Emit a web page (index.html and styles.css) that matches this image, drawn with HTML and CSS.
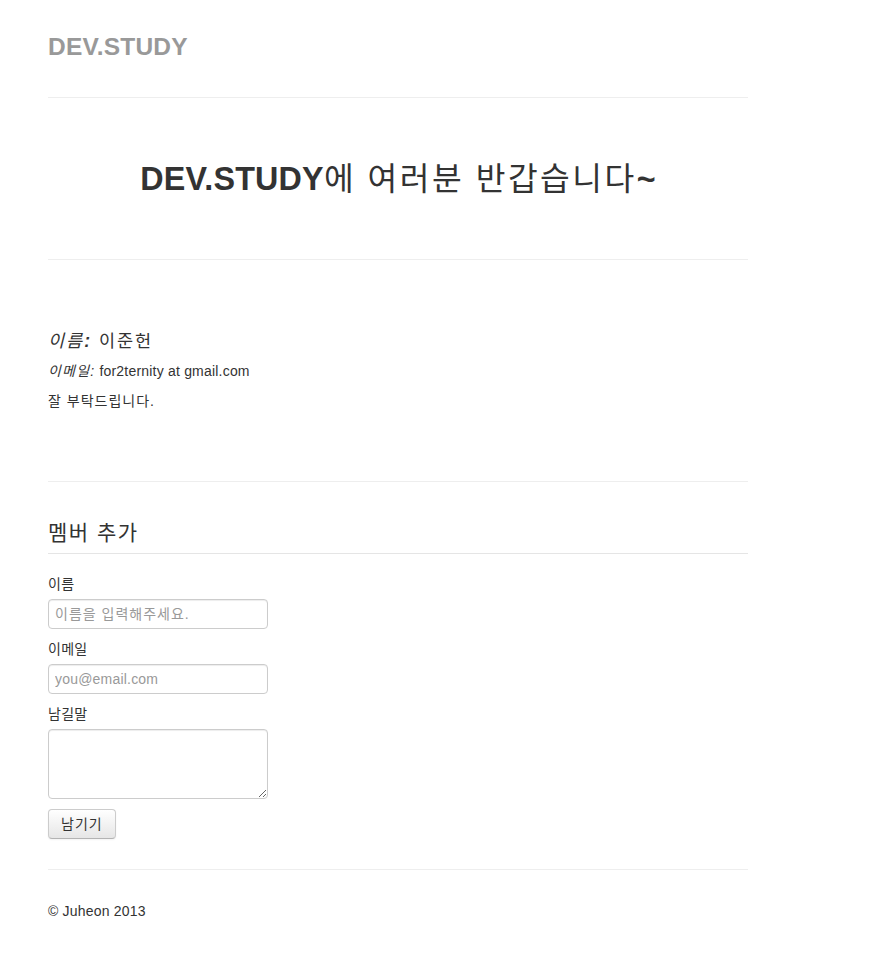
FILE: index.html
```html
<!DOCTYPE html>
<html lang="ko">
<head>
<meta charset="utf-8">
<title>DEV.STUDY</title>
<link rel="stylesheet" href="styles.css">
</head>
<body>
<div class="container">
  <div class="masthead">
    <h3 class="brand">DEV.STUDY</h3>
  </div>
  <hr class="divider">
  <div class="jumbotron">
    <h1 class="hero"><b>DEV.STUDY</b><span class="hero-ko">에 여러분 반갑습니다</span><b>~</b></h1>
  </div>
  <hr class="divider">
  <div class="marketing">
    <h4 class="member-name"><em>이름<b>:</b></em> 이준헌</h4>
    <p class="line"><em class="email-label">이메일:</em> for2ternity at gmail.com</p>
    <p class="line greeting">잘 부탁드립니다.</p>
  </div>
  <hr class="divider">
  <form class="member-form" onsubmit="return false;">
    <fieldset class="fields">
      <legend class="legend">멤버 추가</legend>
      <label class="label" for="name">이름</label>
      <input class="field field-ko" id="name" type="text" placeholder="이름을 입력해주세요.">
      <label class="label" for="email">이메일</label>
      <input class="field" id="email" type="text" placeholder="you@email.com">
      <label class="label" for="msg">남길말</label>
      <textarea class="area" id="msg"></textarea>
      <div class="actions">
        <button class="btn" type="submit">남기기</button>
      </div>
    </fieldset>
  </form>
  <hr class="divider">
  <div class="footer">
    <p class="line">© Juheon 2013</p>
  </div>
</div>
</body>
</html>
```

FILE: styles.css
```css
html, body {
  margin: 0;
  padding: 0;
  background: #fff;
}
body {
  font-family: "Liberation Sans", "Noto Sans CJK KR", sans-serif;
  font-size: 14px;
  line-height: 20px;
  color: #333;
  letter-spacing: 0.2px;
}
.container {
  width: 700px;
  margin: 0 0 0 48px;
  padding: 27px 0 40px;
}
.brand {
  margin: 0;
  font-size: 24.5px;
  line-height: 40px;
  font-weight: bold;
  color: #999;
}
.divider {
  margin: 30px 0;
  border: 0;
  border-top: 1px solid #eee;
  border-bottom: 1px solid #fff;
  height: 0;
}
.jumbotron {
  margin: 60px 0;
  text-align: center;
}
.hero {
  margin: 0;
  font-size: 32.3px;
  line-height: 40px;
  font-weight: normal;
  color: #333;
}
.hero b {
  font-weight: bold;
}
.hero-ko {
  letter-spacing: 2.5px;
}
.marketing {
  margin: 60px 0;
  display: flow-root;
}
.member-name {
  margin: 10px 0;
  font-size: 17.5px;
  line-height: 20px;
  font-weight: normal;
  letter-spacing: 2px;
}
.line {
  margin: 0 0 10px;
}
.email-label {
  letter-spacing: 1.2px;
}
.greeting {
  letter-spacing: 1px;
}
.member-form {
  margin: 0 0 20px;
}
.fields {
  margin: 0;
  padding: 0;
  border: 0;
  min-width: 0;
}
.legend {
  display: block;
  width: 100%;
  padding: 0;
  margin: 0 0 20px;
  font-size: 21px;
  line-height: 40px;
  color: #333;
  border: 0;
  border-bottom: 1px solid #e5e5e5;
  letter-spacing: 1.5px;
}
.label {
  display: block;
  margin-bottom: 5px;
  letter-spacing: 0.3px;
}
.field, .area {
  display: block;
  box-sizing: border-box;
  width: 220px;
  margin: 0 0 10px;
  padding: 4px 6px;
  font-family: "Liberation Sans", "Noto Sans CJK KR", sans-serif;
  font-size: 14px;
  line-height: 20px;
  letter-spacing: 0.2px;
  color: #555;
  background: #fff;
  border: 1px solid #ccc;
  border-radius: 4px;
  box-shadow: inset 0 1px 1px rgba(0,0,0,0.075);
}
.field {
  height: 30px;
}
.field-ko {
  letter-spacing: 1px;
}
.area {
  height: 70px;
  resize: both;
}
.field::placeholder {
  color: #999;
}
.actions {
  display: flex;
}
.btn {
  padding: 4px 12px;
  font-family: "Liberation Sans", "Noto Sans CJK KR", sans-serif;
  font-size: 14px;
  line-height: 20px;
  letter-spacing: 1px;
  color: #333;
  background: linear-gradient(#fff, #e6e6e6);
  border: 1px solid #ccc;
  border-bottom-color: #b3b3b3;
  border-radius: 4px;
  box-shadow: inset 0 1px 0 rgba(255,255,255,0.2), 0 1px 2px rgba(0,0,0,0.05);
  cursor: pointer;
}
.footer {
  display: flow-root;
}
```
